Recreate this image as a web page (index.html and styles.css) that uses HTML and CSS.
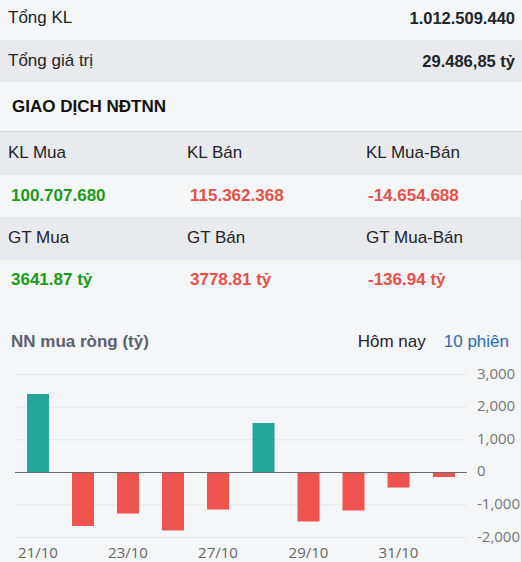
FILE: index.html
```html
<!DOCTYPE html>
<html lang="vi">
<head>
<meta charset="utf-8">
<title>Giao dịch NĐTNN</title>
<link rel="stylesheet" href="styles.css">
</head>
<body>
<div class="page">
  <div class="sum-row first">
    <span class="sum-label">Tổng KL</span>
    <span class="sum-value">1.012.509.440</span>
  </div>
  <div class="sum-row second">
    <span class="sum-label">Tổng giá trị</span>
    <span class="sum-value">29.486,85 tỷ</span>
  </div>
  <div class="section-title">GIAO DỊCH NĐTNN</div>
  <div class="trade-grid">
    <div class="cell head">KL Mua</div>
    <div class="cell head">KL Bán</div>
    <div class="cell head">KL Mua-Bán</div>
    <div class="cell val up">100.707.680</div>
    <div class="cell val down">115.362.368</div>
    <div class="cell val down">-14.654.688</div>
    <div class="cell head">GT Mua</div>
    <div class="cell head">GT Bán</div>
    <div class="cell head">GT Mua-Bán</div>
    <div class="cell val last up">3641.87 tỷ</div>
    <div class="cell val last down">3778.81 tỷ</div>
    <div class="cell val last down">-136.94 tỷ</div>
  </div>
  <div class="chart-head">
    <span class="chart-title">NN mua ròng (tỷ)</span>
    <div class="tabs">
      <span class="tab">Hôm nay</span>
      <span class="tab active">10 phiên</span>
    </div>
  </div>
  <svg class="chart" width="522" height="202" viewBox="0 0 522 202">
    <g class="grid">
      <line x1="15" x2="467" y1="14.5" y2="14.5"/>
      <line x1="15" x2="467" y1="47.1" y2="47.1"/>
      <line x1="15" x2="467" y1="79.7" y2="79.7"/>
      <line x1="15" x2="467" y1="144.9" y2="144.9"/>
      <line x1="15" x2="467" y1="177.5" y2="177.5"/>
    </g>
    <g class="bars">
      <rect class="pos" x="27" y="34" width="22" height="78.5"/>
      <rect class="neg" x="72" y="112.5" width="22" height="53.5"/>
      <rect class="neg" x="117" y="112.5" width="22" height="41"/>
      <rect class="neg" x="162" y="112.5" width="22" height="58"/>
      <rect class="neg" x="207" y="112.5" width="22" height="37"/>
      <rect class="pos" x="252.5" y="63" width="22" height="49.5"/>
      <rect class="neg" x="297.5" y="112.5" width="22" height="49"/>
      <rect class="neg" x="342.5" y="112.5" width="22" height="38"/>
      <rect class="neg" x="387.5" y="112.5" width="22" height="15"/>
      <rect class="neg" x="433" y="112.5" width="22" height="4.5"/>
    </g>
    <line class="zero" x1="15" x2="467" y1="112.5" y2="112.5"/>
    <g class="ylab">
      <text x="477" y="14.5">3,000</text>
      <text x="477" y="47.1">2,000</text>
      <text x="477" y="79.7">1,000</text>
      <text x="477" y="112.3">0</text>
      <text x="477" y="144.9">-1,000</text>
      <text x="477" y="177.5">-2,000</text>
    </g>
    <g class="xlab">
      <text x="38" y="198">21/10</text>
      <text x="128" y="198">23/10</text>
      <text x="218" y="198">27/10</text>
      <text x="308.5" y="198">29/10</text>
      <text x="398.5" y="198">31/10</text>
    </g>
  </svg>
</div>
</body>
</html>
```

FILE: styles.css
```css
* { box-sizing: border-box; }
html, body {
  margin: 0;
  padding: 0;
  background: #f5f6f8;
}
body {
  font-family: "Liberation Sans", Arial, sans-serif;
  color: #222428;
  width: 522px;
  height: 562px;
  overflow: hidden;
  position: relative;
}
body::after {
  content: "";
  position: absolute;
  right: 0;
  top: 200px;
  bottom: 0;
  width: 1px;
  background: #c9cbcf;
}
.page {
  display: flex;
  flex-direction: column;
}
.sum-row {
  display: flex;
  justify-content: space-between;
  align-items: center;
  padding: 0 7px 0 8px;
}
.sum-row.first {
  height: 40px;
  padding-bottom: 4px;
}
.sum-row.second {
  height: 42px;
  background: #e8eaee;
}
.sum-label {
  font-size: 17px;
}
.sum-value {
  font-size: 16.5px;
  font-weight: bold;
}
.section-title {
  height: 49px;
  display: flex;
  align-items: center;
  padding-left: 12px;
  font-weight: bold;
  font-size: 17px;
  color: #111;
}
.trade-grid {
  display: grid;
  grid-template-columns: 179px 179px 1fr;
  border-top: 1px solid #d3d5d9;
}
.cell {
  display: flex;
  align-items: center;
  font-size: 17px;
}
.cell.head {
  height: 43px;
  background: #e8eaee;
  padding-left: 8px;
  padding-bottom: 1px;
}
.cell.val {
  height: 42px;
  padding-left: 11px;
  font-weight: bold;
}
.cell.val.last {
  height: 40px;
}
.cell.val:nth-child(3n+3) {
  padding-left: 10px;
}
.up { color: #1a9a1a; }
.down { color: #e5504a; }
.chart-head {
  height: 60px;
  display: flex;
  justify-content: space-between;
  align-items: flex-start;
  padding: 30px 13px 0 11px;
}
.chart-title {
  font-size: 17px;
  font-weight: bold;
  color: #5a6170;
  line-height: 24px;
}
.tabs {
  display: flex;
  gap: 18px;
  font-size: 17px;
  line-height: 24px;
}
.tab { color: #222428; }
.tab.active { color: #2d6cb5; }
.chart {
  display: block;
}
.grid line {
  stroke: #e6e7ea;
  stroke-width: 1;
}
.zero {
  stroke: #6b6b6b;
  stroke-width: 1;
}
.bars .pos { fill: #26a69a; }
.bars .neg { fill: #ef5350; }
.ylab text {
  font-family: "Open Sans", sans-serif;
  font-size: 15px;
  fill: #777;
  dominant-baseline: middle;
}
.xlab text {
  font-family: "Open Sans", sans-serif;
  font-size: 15px;
  fill: #666;
  text-anchor: middle;
}
```
